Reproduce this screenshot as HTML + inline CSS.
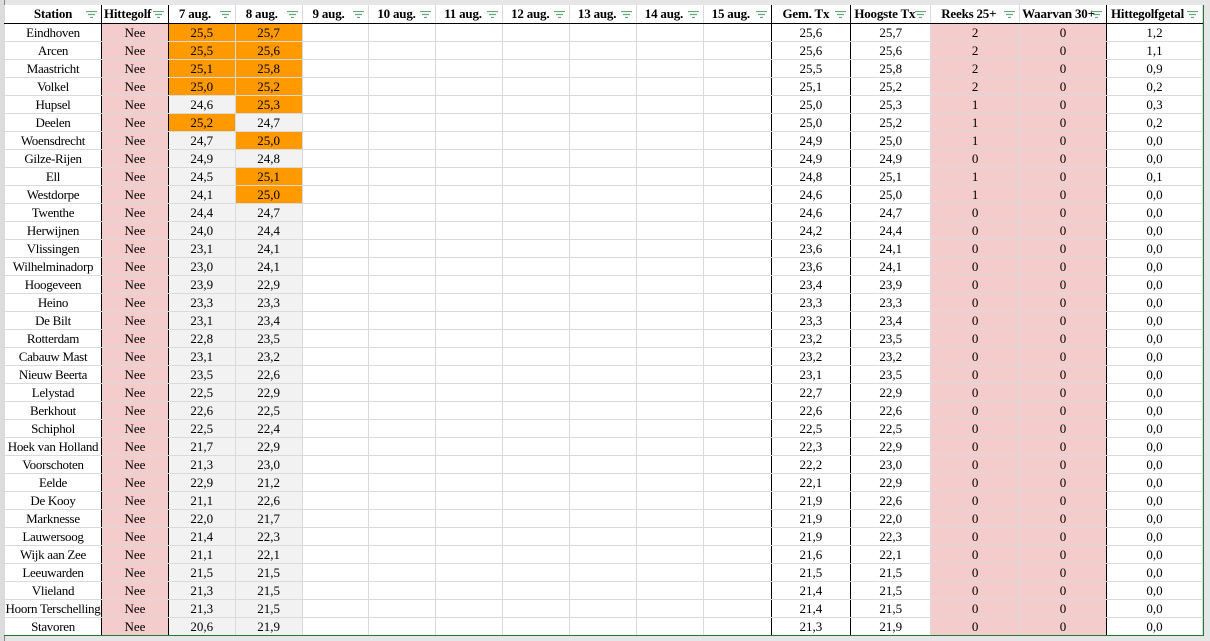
<!DOCTYPE html>
<html><head><meta charset="utf-8"><style>
html,body{margin:0;padding:0;width:1210px;height:641px;overflow:hidden;background:#e6e6e6;font-family:"Liberation Serif",serif;font-size:13px;color:#000}
#wrap{position:absolute;left:4px;top:5px;width:1200px;height:631px;background:#fff;border-right:1px solid #1e7b34;border-bottom:1px solid #1e7b34;box-sizing:border-box;overflow:hidden}
table{border-collapse:collapse;table-layout:fixed;position:absolute;left:0;top:0}
td{height:17px;padding:0;border:1px solid #dadada;text-align:center;line-height:17px;white-space:nowrap;overflow:hidden}
tr.h td{font-weight:bold;border-top:none;border-bottom:1px solid #000;position:relative;height:18px;line-height:18px;letter-spacing:-0.2px}
td.bl{border-right:1px solid #000}
.p{background:#f4cccc}
.g{background:#f2f2f2}
.o{background:#ff9900}
tr.h td svg{position:absolute;right:4px;top:6px}
</style></head><body>
<div style="position:absolute;left:0;top:0;width:4px;height:641px;background:#dcdcdc;border-right:1px solid #888"></div>
<div id="wrap"><table id="t">
<colgroup><col style="width:97px"><col style="width:67px"><col style="width:67px"><col style="width:67px"><col style="width:67px"><col style="width:67px"><col style="width:67px"><col style="width:67px"><col style="width:67px"><col style="width:67px"><col style="width:68px"><col style="width:80px"><col style="width:80px"><col style="width:89px"><col style="width:87px"><col style="width:96px"></colgroup>
<tbody id="b"></tbody></table></div>
<script>
var f='<svg width="11" height="7"><path d="M0 .5h11M2 3.5h7M4 6.5h3" stroke="#5fa97a" stroke-width="1.2"/></svg>';
var H=["Station","Hittegolf","7 aug.","8 aug.","9 aug.","10 aug.","11 aug.","12 aug.","13 aug.","14 aug.","15 aug.","Gem. Tx","Hoogste Tx","Reeks 25+","Waarvan 30+","Hittegolfgetal"];
var P=[0,2,10,10,10,8,8,8,8,8,8,11,3,10,2,4];
var D=[["Eindhoven","25,5","25,7","25,6","25,7","2","1,2"],["Arcen","25,5","25,6","25,6","25,6","2","1,1"],["Maastricht","25,1","25,8","25,5","25,8","2","0,9"],["Volkel","25,0","25,2","25,1","25,2","2","0,2"],["Hupsel","24,6","25,3","25,0","25,3","1","0,3"],["Deelen","25,2","24,7","25,0","25,2","1","0,2"],["Woensdrecht","24,7","25,0","24,9","25,0","1","0,0"],["Gilze-Rijen","24,9","24,8","24,9","24,9","0","0,0"],["Ell","24,5","25,1","24,8","25,1","1","0,1"],["Westdorpe","24,1","25,0","24,6","25,0","1","0,0"],["Twenthe","24,4","24,7","24,6","24,7","0","0,0"],["Herwijnen","24,0","24,4","24,2","24,4","0","0,0"],["Vlissingen","23,1","24,1","23,6","24,1","0","0,0"],["Wilhelminadorp","23,0","24,1","23,6","24,1","0","0,0"],["Hoogeveen","23,9","22,9","23,4","23,9","0","0,0"],["Heino","23,3","23,3","23,3","23,3","0","0,0"],["De Bilt","23,1","23,4","23,3","23,4","0","0,0"],["Rotterdam","22,8","23,5","23,2","23,5","0","0,0"],["Cabauw Mast","23,1","23,2","23,2","23,2","0","0,0"],["Nieuw Beerta","23,5","22,6","23,1","23,5","0","0,0"],["Lelystad","22,5","22,9","22,7","22,9","0","0,0"],["Berkhout","22,6","22,5","22,6","22,6","0","0,0"],["Schiphol","22,5","22,4","22,5","22,5","0","0,0"],["Hoek van Holland","21,7","22,9","22,3","22,9","0","0,0"],["Voorschoten","21,3","23,0","22,2","23,0","0","0,0"],["Eelde","22,9","21,2","22,1","22,9","0","0,0"],["De Kooy","21,1","22,6","21,9","22,6","0","0,0"],["Marknesse","22,0","21,7","21,9","22,0","0","0,0"],["Lauwersoog","21,4","22,3","21,9","22,3","0","0,0"],["Wijk aan Zee","21,1","22,1","21,6","22,1","0","0,0"],["Leeuwarden","21,5","21,5","21,5","21,5","0","0,0"],["Vlieland","21,3","21,5","21,4","21,5","0","0,0"],["Hoorn Terschelling","21,3","21,5","21,4","21,5","0","0,0"],["Stavoren","20,6","21,9","21,3","21,9","0","0,0"]];
var blk=[0,1,10,11,14];
var s='<tr class="h">';
H.forEach(function(h,i){s+='<td'+(blk.indexOf(i)>=0?' class="bl"':'')+' style="text-align:'+(i==0?'center':'left')+';padding-left:'+P[i]+'px">'+h+f+'</td>';});
s+='</tr>';
D.forEach(function(r){
 var a=parseFloat(r[1].replace(',','.')),b=parseFloat(r[2].replace(',','.'));
 s+='<tr><td class="bl" style="letter-spacing:-0.3px">'+r[0]+'</td><td class="p bl">Nee</td>';
 s+='<td class="'+(a>=25?'o':'g')+'">'+r[1]+'</td><td class="'+(b>=25?'o':'g')+'">'+r[2]+'</td>';
 for(var i=0;i<7;i++)s+='<td'+(i==6?' class="bl"':'')+'></td>';
 s+='<td class="bl">'+r[3]+'</td><td>'+r[4]+'</td><td class="p">'+r[5]+'</td><td class="p bl">0</td><td>'+r[6]+'</td></tr>';
});
document.getElementById('b').innerHTML=s;
</script>
</body></html>
